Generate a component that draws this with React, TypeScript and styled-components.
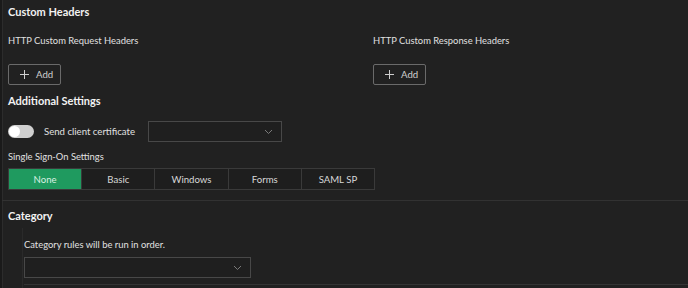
import React, { useState } from "react";
import styled, { createGlobalStyle } from "styled-components";

const Global = createGlobalStyle`
  html, body { margin: 0; padding: 0; background: #212121; }
  body { font-family: Lato, "Noto Sans", sans-serif; color: #e6e6e6; }
  * { box-sizing: border-box; }
`;

const Page = styled.div`
  width: 688px;
  height: 288px;
  overflow: hidden;
  background: #212121;
  border-left: 2px solid #1a1a1a;
  box-shadow: inset 1px 0 0 #2c2c2c;
  display: flex;
  flex-direction: column;
`;

const Section = styled.section`
  padding: 0 6px;
  display: flex;
  flex-direction: column;
`;

const Title = styled.h2<{ $top: number }>`
  margin: ${(p) => p.$top}px 0 0;
  font-size: 11px;
  font-weight: 700;
  color: #f2f2f2;
  line-height: 16px;
  height: 16px;
`;

const Columns = styled.div`
  display: grid;
  grid-template-columns: 365px 1fr;
  margin-top: 14px;
`;

const Col = styled.div`
  display: flex;
  flex-direction: column;
  gap: 16px;
  align-items: flex-start;
`;

const Label = styled.div`
  font-size: 9.4px;
  line-height: 14px;
  height: 14px;
  color: #e0e0e0;
  white-space: nowrap;
`;

const AddButton = styled.button`
  display: flex;
  align-items: center;
  gap: 7px;
  height: 21px;
  width: 53px;
  padding: 0 0 0 11px;
  background: transparent;
  border: 1px solid #6a6a6a;
  border-radius: 2px;
  color: #cfcfcf;
  font-family: inherit;
  font-size: 9.6px;
`;

const Row = styled.div`
  display: flex;
  align-items: center;
  margin-top: 12px;
  height: 21px;
`;

const Toggle = styled.div`
  width: 26px;
  height: 13px;
  border-radius: 7px;
  background: #cfcfcf;
  display: flex;
  align-items: center;
  padding: 0 1px;
  flex-shrink: 0;
`;

const Knob = styled.div`
  width: 11px;
  height: 11px;
  border-radius: 50%;
  background: #ffffff;
`;

const ToggleLabel = styled.span`
  font-size: 9.6px;
  color: #e0e0e0;
  margin-left: 10px;
  width: 104px;
  white-space: nowrap;
`;

const Select = styled.div<{ $w: number }>`
  width: ${(p) => p.$w}px;
  height: 21px;
  border: 1px solid #484848;
  background: #1f1f1f;
  display: flex;
  align-items: center;
  justify-content: flex-end;
  padding-right: 8px;
  color: #777;
  flex-shrink: 0;
`;

const SubLabel = styled(Label)<{ $top: number }>`
  margin-top: ${(p) => p.$top}px;
`;

const Segments = styled.div`
  display: flex;
  margin-top: 4px;
  width: 367px;
  border: 1px solid #3a3a3a;
`;

const Segment = styled.button<{ $active?: boolean }>`
  flex: 1;
  height: 20px;
  border: none;
  border-left: 1px solid #3a3a3a;
  &:first-child { border-left: none; }
  background: ${(p) => (p.$active ? "#1f9a5f" : "#1e1e1e")};
  color: ${(p) => (p.$active ? "#d8f0e2" : "#d8d8d8")};
  font-family: inherit;
  font-size: 9.6px;
  padding: 0;
`;

const Divider = styled.div`
  height: 1px;
  background: #323232;
  margin-top: 10px;
`;

const Indented = styled.div`
  margin: 4px 0 0 20px;
  padding: 10px 0 0 1px;
  border-left: 1px solid #2a2a2a;
  display: flex;
  flex-direction: column;
  flex: 1;
`;

const IndentInner = styled.div`
  display: flex;
  flex-direction: column;
  gap: 5px;
`;

const BottomLine = styled.div`
  height: 1px;
  background: #343434;
  margin-top: 6px;
`;

const Chevron = () => (
  <svg width="9" height="6" viewBox="0 0 9 6" fill="none">
    <path d="M1 1l3.5 3.5L8 1" stroke="#7a7a7a" strokeWidth="1" />
  </svg>
);

const Plus = () => (
  <svg width="9" height="9" viewBox="0 0 9 9">
    <path d="M4.5 0v9M0 4.5h9" stroke="#cfcfcf" strokeWidth="1" />
  </svg>
);

export default function App() {
  const [mode, setMode] = useState("None");
  const modes = ["None", "Basic", "Windows", "Forms", "SAML SP"];
  return (
    <Page>
      <Global />
      <Section>
        <Title $top={4}>Custom Headers</Title>
        <Columns>
          <Col>
            <Label>HTTP Custom Request Headers</Label>
            <AddButton>
              <Plus />
              Add
            </AddButton>
          </Col>
          <Col>
            <Label>HTTP Custom Response Headers</Label>
            <AddButton>
              <Plus />
              Add
            </AddButton>
          </Col>
        </Columns>
        <Title $top={8}>Additional Settings</Title>
        <Row>
          <Toggle>
            <Knob />
          </Toggle>
          <ToggleLabel>Send client certificate</ToggleLabel>
          <Select $w={134}>
            <Chevron />
          </Select>
        </Row>
        <SubLabel $top={8}>Single Sign-On Settings</SubLabel>
        <Segments>
          {modes.map((m) => (
            <Segment key={m} $active={mode === m} onClick={() => setMode(m)}>
              {m}
            </Segment>
          ))}
        </Segments>
      </Section>
      <Divider />
      <Section>
        <Title $top={7}>Category</Title>
      </Section>
      <Indented>
        <IndentInner>
          <Label>Category rules will be run in order.</Label>
          <Select $w={227}>
            <Chevron />
          </Select>
        </IndentInner>
        <BottomLine />
      </Indented>
    </Page>
  );
}
